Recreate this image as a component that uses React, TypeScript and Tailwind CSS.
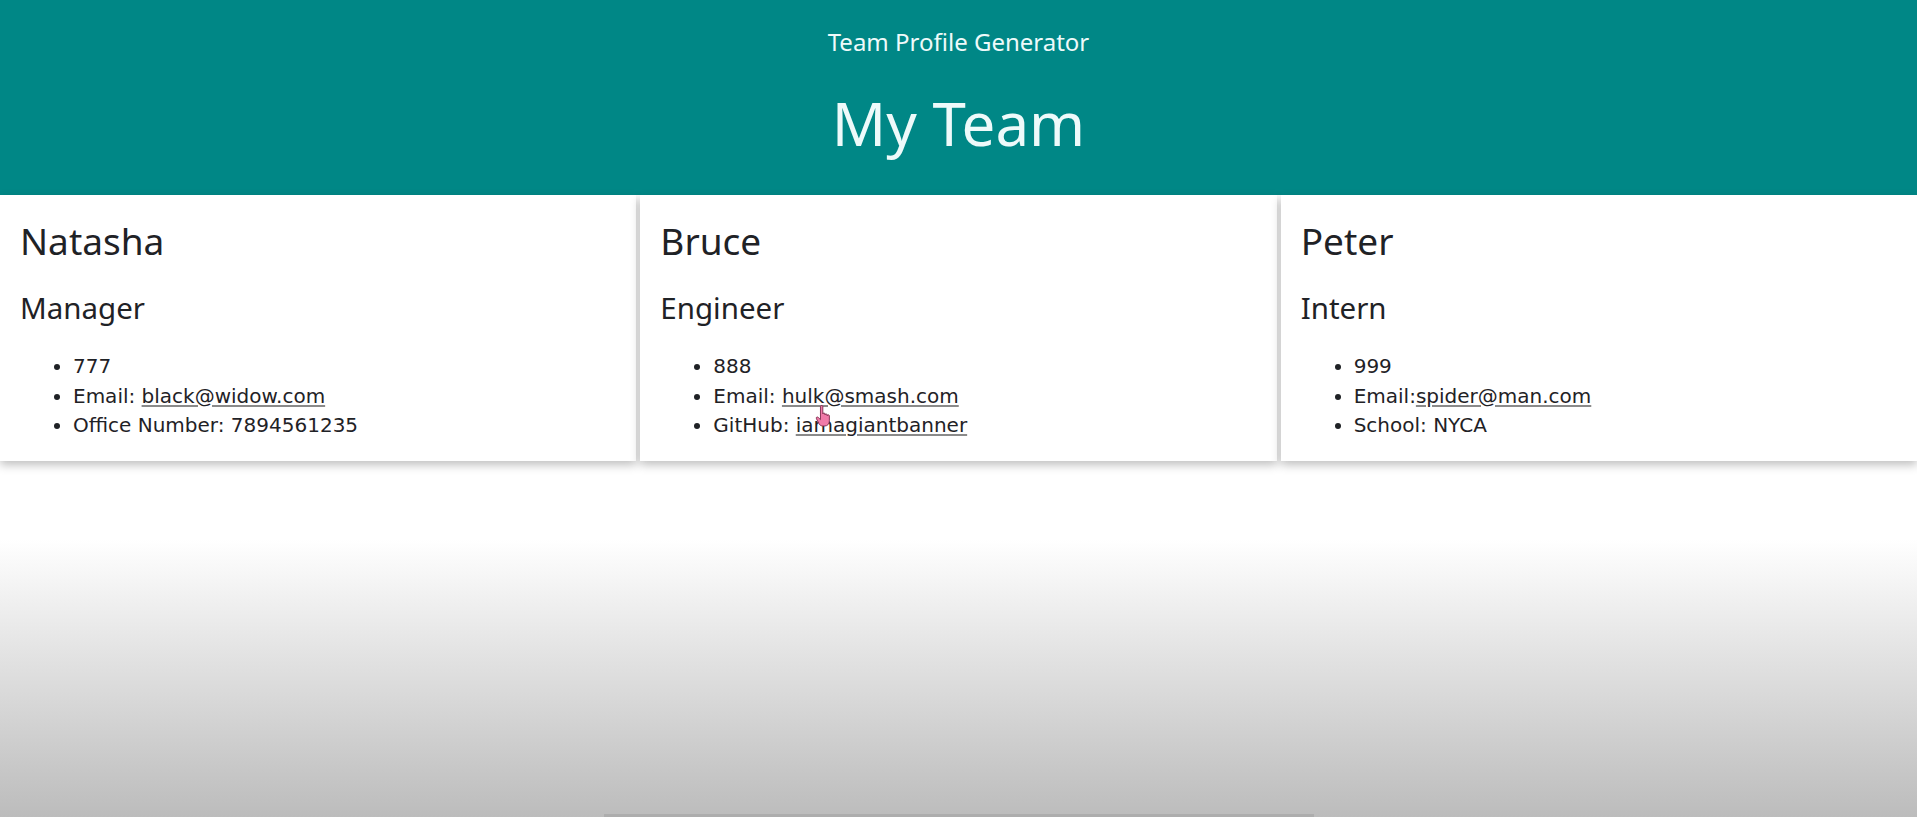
import React from "react";

type Member = {
  name: string;
  role: string;
  id: string;
  email: string;
  emailSep: string;
  extraLabel: string;
  extraValue: string;
  extraLink?: boolean;
};

const TEAM: Member[] = [
  {
    name: "Natasha",
    role: "Manager",
    id: "777",
    email: "black@widow.com",
    emailSep: "Email: ",
    extraLabel: "Office Number: ",
    extraValue: "7894561235",
  },
  {
    name: "Bruce",
    role: "Engineer",
    id: "888",
    email: "hulk@smash.com",
    emailSep: "Email: ",
    extraLabel: "GitHub: ",
    extraValue: "iamagiantbanner",
    extraLink: true,
  },
  {
    name: "Peter",
    role: "Intern",
    id: "999",
    email: "spider@man.com",
    emailSep: "Email:",
    extraLabel: "School: ",
    extraValue: "NYCA",
  },
];

// pink pointer hand sitting over the hulk link
const HandCursor = () => (
  <svg width="20" height="24" viewBox="0 0 22 26" className="pointer-events-none absolute left-[815px] top-[404px] z-20">
    <path
      d="M6 2.5c0-1.4 2.6-1.4 2.6 0v8.2c0-1.3 2.4-1.3 2.4 0v1c0-1.3 2.4-1.3 2.4 0v1c0-1.3 2.4-1.3 2.4 0v5.6c0 3.2-1.8 5.7-5.2 5.7h-2c-2 0-3.2-1-4.3-2.6L1.6 16c-.9-1.4.8-2.6 2-1.4L6 17z"
      fill="#f07aa8"
      stroke="#7a2a4a"
      strokeWidth="1"
      strokeLinejoin="round"
    />
  </svg>
);

const Card = ({ m }: { m: Member }) => (
  <div className="bg-white px-5 pt-[22px] pb-[20px] shadow-[0_4px_9px_rgba(0,0,0,0.25)] text-[#1f2226]">
    <h2 className="text-[37px] leading-[48px] font-['Noto_Sans',sans-serif]">{m.name}</h2>
    <h3 className="mt-[26px] text-[29.5px] leading-[34px] font-['Noto_Sans',sans-serif]">{m.role}</h3>
    <ul className="mt-[27px] list-disc pl-[53px] text-[20px] leading-[29.5px] font-['DejaVu_Sans',sans-serif]">
      <li>{m.id}</li>
      <li>
        {m.emailSep}
        <a href="#" className="underline decoration-[#8a8a8a] underline-offset-2">
          {m.email}
        </a>
      </li>
      <li>
        {m.extraLabel}
        {m.extraLink ? (
          <a href="#" className="underline decoration-[#8a8a8a] underline-offset-2">
            {m.extraValue}
          </a>
        ) : (
          m.extraValue
        )}
      </li>
    </ul>
  </div>
);

export default function App() {
  return (
    <div className="relative flex min-h-[817px] flex-col bg-white">
      <header className="flex h-[195px] flex-col items-center bg-[#008786] pt-[27px] text-[#eefafa] font-['Noto_Sans',sans-serif]">
        <p className="text-[24px] leading-[30px]">Team Profile Generator</p>
        <h1 className="mt-[30px] text-[60px] leading-[72px]">My Team</h1>
      </header>

      <main className="relative z-10 grid grid-cols-3 gap-1">
        {TEAM.map((m) => (
          <Card key={m.name} m={m} />
        ))}
      </main>

      <div className="flex flex-1 items-end justify-center bg-linear-to-b from-white from-[22%] to-[#bcbcbc]">
        <div className="h-[3px] w-[710px] bg-[#adadad]" />
      </div>

      <HandCursor />
    </div>
  );
}
